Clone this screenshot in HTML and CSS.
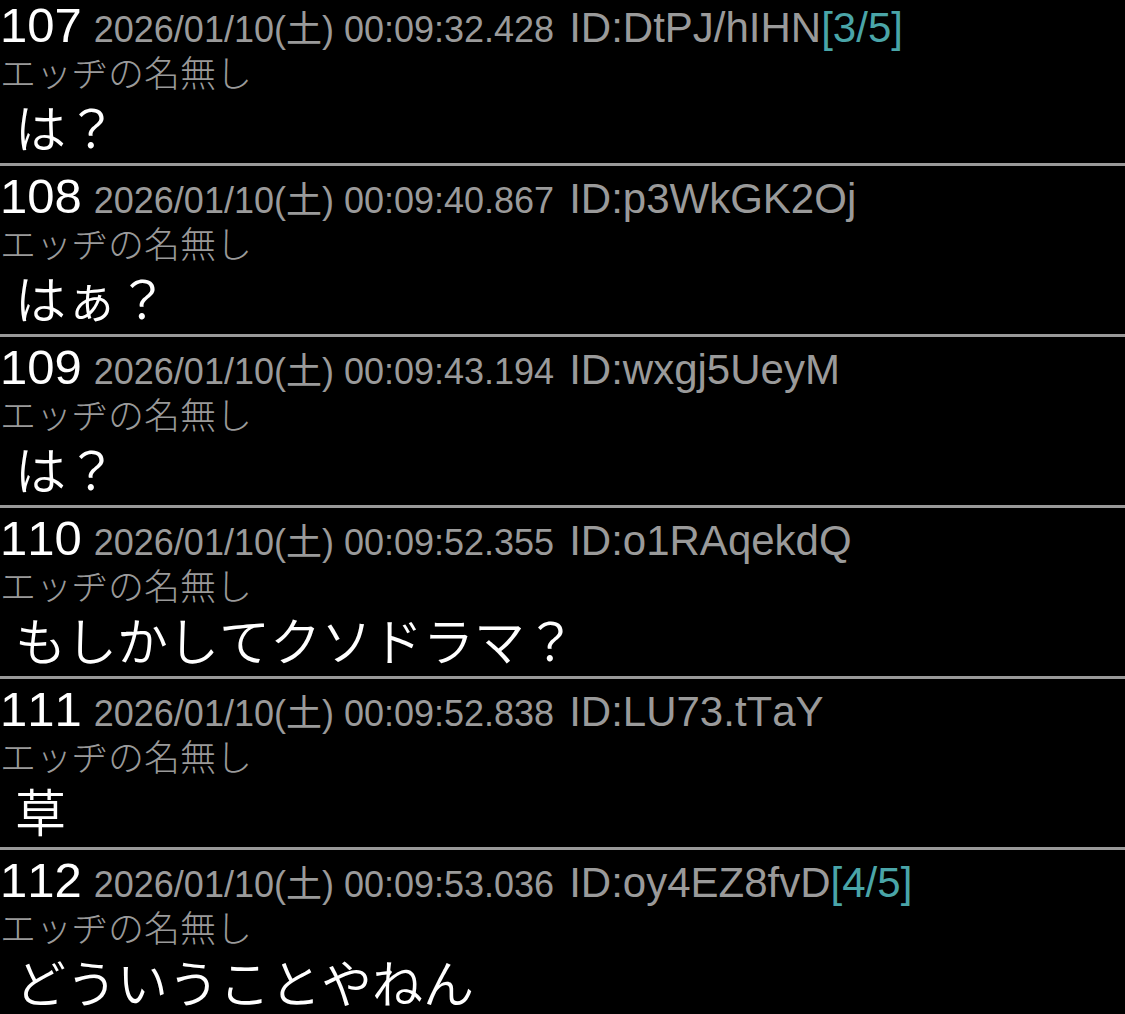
FILE: index.html
```html
<!DOCTYPE html>
<html lang="ja">
<head>
<meta charset="utf-8">
<title>thread</title>
<link rel="stylesheet" href="styles.css">
</head>
<body>
<main class="thread">
  <article class="post">
    <div class="head"><span class="num">107</span> <span class="date">2026/01/10(土) 00:09:32.428</span> <span class="uid">ID:DtPJ/hIHN</span><span class="count">[3/5]</span></div>
    <div class="name">エッヂの名無し</div>
    <div class="body">は？</div>
  </article>
  <article class="post">
    <div class="head"><span class="num">108</span> <span class="date">2026/01/10(土) 00:09:40.867</span> <span class="uid">ID:p3WkGK2Oj</span></div>
    <div class="name">エッヂの名無し</div>
    <div class="body">はぁ？</div>
  </article>
  <article class="post">
    <div class="head"><span class="num">109</span> <span class="date">2026/01/10(土) 00:09:43.194</span> <span class="uid">ID:wxgj5UeyM</span></div>
    <div class="name">エッヂの名無し</div>
    <div class="body">は？</div>
  </article>
  <article class="post">
    <div class="head"><span class="num">110</span> <span class="date">2026/01/10(土) 00:09:52.355</span> <span class="uid">ID:o1RAqekdQ</span></div>
    <div class="name">エッヂの名無し</div>
    <div class="body">もしかしてクソドラマ？</div>
  </article>
  <article class="post">
    <div class="head"><span class="num">111</span> <span class="date">2026/01/10(土) 00:09:52.838</span> <span class="uid">ID:LU73.tTaY</span></div>
    <div class="name">エッヂの名無し</div>
    <div class="body">草</div>
  </article>
  <article class="post">
    <div class="head"><span class="num">112</span> <span class="date">2026/01/10(土) 00:09:53.036</span> <span class="uid">ID:oy4EZ8fvD</span><span class="count">[4/5]</span></div>
    <div class="name">エッヂの名無し</div>
    <div class="body">どういうことやねん</div>
  </article>
</main>
</body>
</html>
```
FILE: styles.css
```css
html, body {
  margin: 0;
  padding: 0;
  background: #000;
}
body {
  font-family: "Liberation Sans", "Noto Sans CJK JP", sans-serif;
  font-kerning: none;
  color: #fff;
  overflow: hidden;
}
.thread {
  margin-top: -5px;
}
.post {
  border-bottom: 3px solid #999;
  padding: 0 0 2px 0;
  height: 166px;
}
.head {
  font-size: 36px;
  line-height: 60px;
  height: 56px;
  white-space: nowrap;
  color: #9a9a9a;
}
.num {
  font-size: 49px;
  color: #fff;
  margin-right: 2px;
}
.date {
  margin-right: 5px;
}
.uid,
.count {
  font-size: 42px;
}
.count {
  color: #4aa5a8;
}
.name {
  font-family: "Noto Sans CJK JP", sans-serif;
  font-weight: 300;
  font-size: 36px;
  line-height: 40px;
  color: #9a9a9a;
}
.body {
  font-family: "Noto Sans CJK JP", sans-serif;
  font-weight: 350;
  font-size: 51px;
  line-height: 70px;
  padding-left: 15px;
  color: #fff;
}
```
